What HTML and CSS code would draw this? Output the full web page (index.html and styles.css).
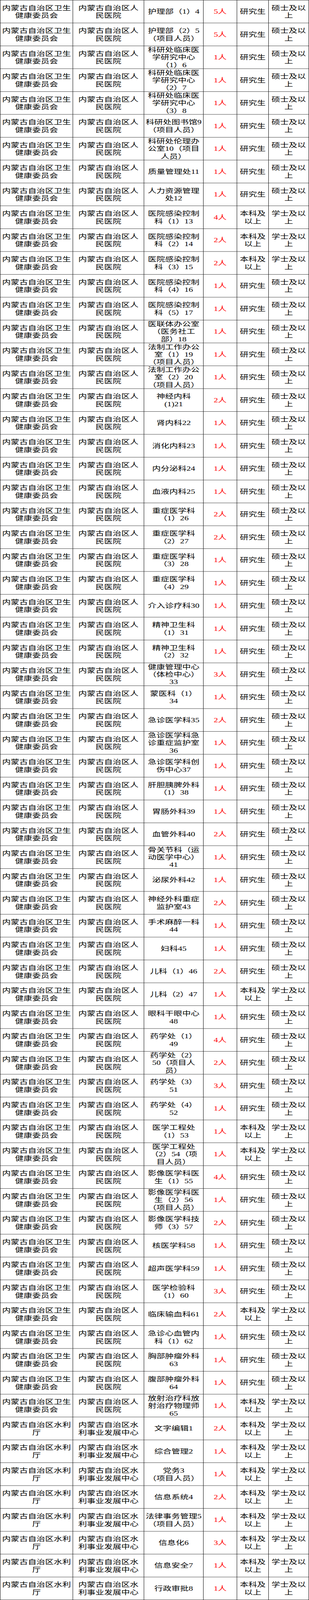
FILE: index.html
```html
<!DOCTYPE html>
<html lang="zh-CN">
<head>
<meta charset="utf-8">
<title>岗位表</title>
<link rel="stylesheet" href="styles.css">
</head>
<body>
<div class="frame">
<div class="table">
<div class="cell org">内蒙古自治区卫生健康委员会</div><div class="cell unit">内蒙古自治区人民医院</div><div class="cell post">护理部（1）4</div><div class="cell num">5人</div><div class="cell edu">研究生</div><div class="cell deg">硕士及以上</div>
<div class="cell org">内蒙古自治区卫生健康委员会</div><div class="cell unit">内蒙古自治区人民医院</div><div class="cell post">护理部（2）5<br>（项目人员）</div><div class="cell num">5人</div><div class="cell edu">研究生</div><div class="cell deg">硕士及以上</div>
<div class="cell org">内蒙古自治区卫生健康委员会</div><div class="cell unit">内蒙古自治区人民医院</div><div class="cell post">科研处临床医<br>学研究中心<br>（1）6</div><div class="cell num">1人</div><div class="cell edu">研究生</div><div class="cell deg">硕士及以上</div>
<div class="cell org">内蒙古自治区卫生健康委员会</div><div class="cell unit">内蒙古自治区人民医院</div><div class="cell post">科研处临床医<br>学研究中心<br>（2）7</div><div class="cell num">1人</div><div class="cell edu">研究生</div><div class="cell deg">硕士及以上</div>
<div class="cell org">内蒙古自治区卫生健康委员会</div><div class="cell unit">内蒙古自治区人民医院</div><div class="cell post">科研处临床医<br>学研究中心<br>（3）8</div><div class="cell num">1人</div><div class="cell edu">研究生</div><div class="cell deg">硕士及以上</div>
<div class="cell org">内蒙古自治区卫生健康委员会</div><div class="cell unit">内蒙古自治区人民医院</div><div class="cell post">科研处图书馆9<br>（项目人员）</div><div class="cell num">1人</div><div class="cell edu">研究生</div><div class="cell deg">硕士及以上</div>
<div class="cell org">内蒙古自治区卫生健康委员会</div><div class="cell unit">内蒙古自治区人民医院</div><div class="cell post">科研处伦理办<br>公室10（项目<br>人员）</div><div class="cell num">1人</div><div class="cell edu">研究生</div><div class="cell deg">硕士及以上</div>
<div class="cell org">内蒙古自治区卫生健康委员会</div><div class="cell unit">内蒙古自治区人民医院</div><div class="cell post">质量管理处11</div><div class="cell num">1人</div><div class="cell edu">研究生</div><div class="cell deg">硕士及以上</div>
<div class="cell org">内蒙古自治区卫生健康委员会</div><div class="cell unit">内蒙古自治区人民医院</div><div class="cell post">人力资源管理<br>处12</div><div class="cell num">1人</div><div class="cell edu">研究生</div><div class="cell deg">硕士及以上</div>
<div class="cell org">内蒙古自治区卫生健康委员会</div><div class="cell unit">内蒙古自治区人民医院</div><div class="cell post">医院感染控制<br>科（1）13</div><div class="cell num">4人</div><div class="cell edu">本科及以上</div><div class="cell deg">学士及以上</div>
<div class="cell org">内蒙古自治区卫生健康委员会</div><div class="cell unit">内蒙古自治区人民医院</div><div class="cell post">医院感染控制<br>科（2）14</div><div class="cell num">2人</div><div class="cell edu">本科及以上</div><div class="cell deg">学士及以上</div>
<div class="cell org">内蒙古自治区卫生健康委员会</div><div class="cell unit">内蒙古自治区人民医院</div><div class="cell post">医院感染控制<br>科（3）15</div><div class="cell num">2人</div><div class="cell edu">本科及以上</div><div class="cell deg">学士及以上</div>
<div class="cell org">内蒙古自治区卫生健康委员会</div><div class="cell unit">内蒙古自治区人民医院</div><div class="cell post">医院感染控制<br>科（4）16</div><div class="cell num">1人</div><div class="cell edu">研究生</div><div class="cell deg">硕士及以上</div>
<div class="cell org">内蒙古自治区卫生健康委员会</div><div class="cell unit">内蒙古自治区人民医院</div><div class="cell post">医院感染控制<br>科（5）17</div><div class="cell num">1人</div><div class="cell edu">研究生</div><div class="cell deg">硕士及以上</div>
<div class="cell org">内蒙古自治区卫生健康委员会</div><div class="cell unit">内蒙古自治区人民医院</div><div class="cell post">医联体办公室<br>（医务社工<br>部）18</div><div class="cell num">1人</div><div class="cell edu">研究生</div><div class="cell deg">硕士及以上</div>
<div class="cell org">内蒙古自治区卫生健康委员会</div><div class="cell unit">内蒙古自治区人民医院</div><div class="cell post">法制工作办公<br>室（1）19<br>（项目人员）</div><div class="cell num">1人</div><div class="cell edu">研究生</div><div class="cell deg">硕士及以上</div>
<div class="cell org">内蒙古自治区卫生健康委员会</div><div class="cell unit">内蒙古自治区人民医院</div><div class="cell post">法制工作办公<br>室（2）20<br>（项目人员）</div><div class="cell num">1人</div><div class="cell edu">研究生</div><div class="cell deg">硕士及以上</div>
<div class="cell org">内蒙古自治区卫生健康委员会</div><div class="cell unit">内蒙古自治区人民医院</div><div class="cell post">神经内科<br>(1)21</div><div class="cell num">2人</div><div class="cell edu">研究生</div><div class="cell deg">硕士及以上</div>
<div class="cell org">内蒙古自治区卫生健康委员会</div><div class="cell unit">内蒙古自治区人民医院</div><div class="cell post">肾内科22</div><div class="cell num">1人</div><div class="cell edu">研究生</div><div class="cell deg">硕士及以上</div>
<div class="cell org">内蒙古自治区卫生健康委员会</div><div class="cell unit">内蒙古自治区人民医院</div><div class="cell post">消化内科23</div><div class="cell num">1人</div><div class="cell edu">研究生</div><div class="cell deg">硕士及以上</div>
<div class="cell org">内蒙古自治区卫生健康委员会</div><div class="cell unit">内蒙古自治区人民医院</div><div class="cell post">内分泌科24</div><div class="cell num">1人</div><div class="cell edu">研究生</div><div class="cell deg">硕士及以上</div>
<div class="cell org">内蒙古自治区卫生健康委员会</div><div class="cell unit">内蒙古自治区人民医院</div><div class="cell post">血液内科25</div><div class="cell num">1人</div><div class="cell edu">研究生</div><div class="cell deg">硕士及以上</div>
<div class="cell org">内蒙古自治区卫生健康委员会</div><div class="cell unit">内蒙古自治区人民医院</div><div class="cell post">重症医学科<br>（1）26</div><div class="cell num">2人</div><div class="cell edu">研究生</div><div class="cell deg">硕士及以上</div>
<div class="cell org">内蒙古自治区卫生健康委员会</div><div class="cell unit">内蒙古自治区人民医院</div><div class="cell post">重症医学科<br>（2）27</div><div class="cell num">2人</div><div class="cell edu">研究生</div><div class="cell deg">硕士及以上</div>
<div class="cell org">内蒙古自治区卫生健康委员会</div><div class="cell unit">内蒙古自治区人民医院</div><div class="cell post">重症医学科<br>（3）28</div><div class="cell num">1人</div><div class="cell edu">研究生</div><div class="cell deg">硕士及以上</div>
<div class="cell org">内蒙古自治区卫生健康委员会</div><div class="cell unit">内蒙古自治区人民医院</div><div class="cell post">重症医学科<br>（4）29</div><div class="cell num">1人</div><div class="cell edu">研究生</div><div class="cell deg">硕士及以上</div>
<div class="cell org">内蒙古自治区卫生健康委员会</div><div class="cell unit">内蒙古自治区人民医院</div><div class="cell post">介入诊疗科30</div><div class="cell num">1人</div><div class="cell edu">研究生</div><div class="cell deg">硕士及以上</div>
<div class="cell org">内蒙古自治区卫生健康委员会</div><div class="cell unit">内蒙古自治区人民医院</div><div class="cell post">精神卫生科<br>（1）31</div><div class="cell num">1人</div><div class="cell edu">研究生</div><div class="cell deg">硕士及以上</div>
<div class="cell org">内蒙古自治区卫生健康委员会</div><div class="cell unit">内蒙古自治区人民医院</div><div class="cell post">精神卫生科<br>（2）32</div><div class="cell num">1人</div><div class="cell edu">研究生</div><div class="cell deg">硕士及以上</div>
<div class="cell org">内蒙古自治区卫生健康委员会</div><div class="cell unit">内蒙古自治区人民医院</div><div class="cell post">健康管理中心<br>（体检中心）<br>33</div><div class="cell num">3人</div><div class="cell edu">研究生</div><div class="cell deg">硕士及以上</div>
<div class="cell org">内蒙古自治区卫生健康委员会</div><div class="cell unit">内蒙古自治区人民医院</div><div class="cell post">蒙医科（1）<br>34</div><div class="cell num">1人</div><div class="cell edu">研究生</div><div class="cell deg">硕士及以上</div>
<div class="cell org">内蒙古自治区卫生健康委员会</div><div class="cell unit">内蒙古自治区人民医院</div><div class="cell post">急诊医学科35</div><div class="cell num">2人</div><div class="cell edu">研究生</div><div class="cell deg">硕士及以上</div>
<div class="cell org">内蒙古自治区卫生健康委员会</div><div class="cell unit">内蒙古自治区人民医院</div><div class="cell post">急诊医学科急<br>诊重症监护室<br>36</div><div class="cell num">1人</div><div class="cell edu">研究生</div><div class="cell deg">硕士及以上</div>
<div class="cell org">内蒙古自治区卫生健康委员会</div><div class="cell unit">内蒙古自治区人民医院</div><div class="cell post">急诊医学科创<br>伤中心37</div><div class="cell num">1人</div><div class="cell edu">研究生</div><div class="cell deg">硕士及以上</div>
<div class="cell org">内蒙古自治区卫生健康委员会</div><div class="cell unit">内蒙古自治区人民医院</div><div class="cell post">肝胆胰脾外科<br>（1）38</div><div class="cell num">1人</div><div class="cell edu">研究生</div><div class="cell deg">硕士及以上</div>
<div class="cell org">内蒙古自治区卫生健康委员会</div><div class="cell unit">内蒙古自治区人民医院</div><div class="cell post">胃肠外科39</div><div class="cell num">1人</div><div class="cell edu">研究生</div><div class="cell deg">硕士及以上</div>
<div class="cell org">内蒙古自治区卫生健康委员会</div><div class="cell unit">内蒙古自治区人民医院</div><div class="cell post">血管外科40</div><div class="cell num">2人</div><div class="cell edu">研究生</div><div class="cell deg">硕士及以上</div>
<div class="cell org">内蒙古自治区卫生健康委员会</div><div class="cell unit">内蒙古自治区人民医院</div><div class="cell post">骨关节科（运<br>动医学中心）<br>41</div><div class="cell num">1人</div><div class="cell edu">研究生</div><div class="cell deg">硕士及以上</div>
<div class="cell org">内蒙古自治区卫生健康委员会</div><div class="cell unit">内蒙古自治区人民医院</div><div class="cell post">泌尿外科42</div><div class="cell num">1人</div><div class="cell edu">研究生</div><div class="cell deg">硕士及以上</div>
<div class="cell org">内蒙古自治区卫生健康委员会</div><div class="cell unit">内蒙古自治区人民医院</div><div class="cell post">神经外科重症<br>监护室43</div><div class="cell num">2人</div><div class="cell edu">研究生</div><div class="cell deg">硕士及以上</div>
<div class="cell org">内蒙古自治区卫生健康委员会</div><div class="cell unit">内蒙古自治区人民医院</div><div class="cell post">手术麻醉一科<br>44</div><div class="cell num">1人</div><div class="cell edu">研究生</div><div class="cell deg">硕士及以上</div>
<div class="cell org">内蒙古自治区卫生健康委员会</div><div class="cell unit">内蒙古自治区人民医院</div><div class="cell post">妇科45</div><div class="cell num">1人</div><div class="cell edu">研究生</div><div class="cell deg">硕士及以上</div>
<div class="cell org">内蒙古自治区卫生健康委员会</div><div class="cell unit">内蒙古自治区人民医院</div><div class="cell post">儿科（1）46</div><div class="cell num">2人</div><div class="cell edu">研究生</div><div class="cell deg">硕士及以上</div>
<div class="cell org">内蒙古自治区卫生健康委员会</div><div class="cell unit">内蒙古自治区人民医院</div><div class="cell post">儿科（2）47</div><div class="cell num">1人</div><div class="cell edu">本科及以上</div><div class="cell deg">学士及以上</div>
<div class="cell org">内蒙古自治区卫生健康委员会</div><div class="cell unit">内蒙古自治区人民医院</div><div class="cell post">眼科干眼中心<br>48</div><div class="cell num">1人</div><div class="cell edu">研究生</div><div class="cell deg">硕士及以上</div>
<div class="cell org">内蒙古自治区卫生健康委员会</div><div class="cell unit">内蒙古自治区人民医院</div><div class="cell post">药学处（1）<br>49</div><div class="cell num">4人</div><div class="cell edu">研究生</div><div class="cell deg">硕士及以上</div>
<div class="cell org">内蒙古自治区卫生健康委员会</div><div class="cell unit">内蒙古自治区人民医院</div><div class="cell post">药学处（2）<br>50（项目人<br>员）</div><div class="cell num">2人</div><div class="cell edu">研究生</div><div class="cell deg">硕士及以上</div>
<div class="cell org">内蒙古自治区卫生健康委员会</div><div class="cell unit">内蒙古自治区人民医院</div><div class="cell post">药学处（3）<br>51</div><div class="cell num">3人</div><div class="cell edu">研究生</div><div class="cell deg">硕士及以上</div>
<div class="cell org">内蒙古自治区卫生健康委员会</div><div class="cell unit">内蒙古自治区人民医院</div><div class="cell post">药学处（4）<br>52</div><div class="cell num">1人</div><div class="cell edu">研究生</div><div class="cell deg">硕士及以上</div>
<div class="cell org">内蒙古自治区卫生健康委员会</div><div class="cell unit">内蒙古自治区人民医院</div><div class="cell post">医学工程处<br>（1）53</div><div class="cell num">1人</div><div class="cell edu">本科及以上</div><div class="cell deg">学士及以上</div>
<div class="cell org">内蒙古自治区卫生健康委员会</div><div class="cell unit">内蒙古自治区人民医院</div><div class="cell post">医学工程处<br>（2）54（项<br>目人员）</div><div class="cell num">1人</div><div class="cell edu">本科及以上</div><div class="cell deg">学士及以上</div>
<div class="cell org">内蒙古自治区卫生健康委员会</div><div class="cell unit">内蒙古自治区人民医院</div><div class="cell post">影像医学科医<br>生（1）55</div><div class="cell num">4人</div><div class="cell edu">研究生</div><div class="cell deg">硕士及以上</div>
<div class="cell org">内蒙古自治区卫生健康委员会</div><div class="cell unit">内蒙古自治区人民医院</div><div class="cell post">影像医学科医<br>生（2）56<br>（项目人员）</div><div class="cell num">1人</div><div class="cell edu">研究生</div><div class="cell deg">硕士及以上</div>
<div class="cell org">内蒙古自治区卫生健康委员会</div><div class="cell unit">内蒙古自治区人民医院</div><div class="cell post">影像医学科技<br>师（3）57</div><div class="cell num">2人</div><div class="cell edu">研究生</div><div class="cell deg">硕士及以上</div>
<div class="cell org">内蒙古自治区卫生健康委员会</div><div class="cell unit">内蒙古自治区人民医院</div><div class="cell post">核医学科58</div><div class="cell num">1人</div><div class="cell edu">研究生</div><div class="cell deg">硕士及以上</div>
<div class="cell org">内蒙古自治区卫生健康委员会</div><div class="cell unit">内蒙古自治区人民医院</div><div class="cell post">超声医学科59</div><div class="cell num">1人</div><div class="cell edu">研究生</div><div class="cell deg">硕士及以上</div>
<div class="cell org">内蒙古自治区卫生健康委员会</div><div class="cell unit">内蒙古自治区人民医院</div><div class="cell post">医学检验科<br>（1）60</div><div class="cell num">3人</div><div class="cell edu">研究生</div><div class="cell deg">硕士及以上</div>
<div class="cell org">内蒙古自治区卫生健康委员会</div><div class="cell unit">内蒙古自治区人民医院</div><div class="cell post">临床输血科61</div><div class="cell num">2人</div><div class="cell edu">本科及以上</div><div class="cell deg">学士及以上</div>
<div class="cell org">内蒙古自治区卫生健康委员会</div><div class="cell unit">内蒙古自治区人民医院</div><div class="cell post">急诊心血管内<br>科（1）62</div><div class="cell num">1人</div><div class="cell edu">研究生</div><div class="cell deg">硕士及以上</div>
<div class="cell org">内蒙古自治区卫生健康委员会</div><div class="cell unit">内蒙古自治区人民医院</div><div class="cell post">胸部肿瘤外科<br>63</div><div class="cell num">1人</div><div class="cell edu">研究生</div><div class="cell deg">硕士及以上</div>
<div class="cell org">内蒙古自治区卫生健康委员会</div><div class="cell unit">内蒙古自治区人民医院</div><div class="cell post">腹部肿瘤外科<br>64</div><div class="cell num">1人</div><div class="cell edu">研究生</div><div class="cell deg">硕士及以上</div>
<div class="cell org">内蒙古自治区卫生健康委员会</div><div class="cell unit">内蒙古自治区人民医院</div><div class="cell post">放射治疗科放<br>射治疗物理师<br>65</div><div class="cell num">1人</div><div class="cell edu">本科及以上</div><div class="cell deg">学士及以上</div>
<div class="cell org">内蒙古自治区水利厅</div><div class="cell unit">内蒙古自治区水利事业发展中心</div><div class="cell post">文字编辑1</div><div class="cell num">2人</div><div class="cell edu">本科及以上</div><div class="cell deg">学士及以上</div>
<div class="cell org">内蒙古自治区水利厅</div><div class="cell unit">内蒙古自治区水利事业发展中心</div><div class="cell post">综合管理2</div><div class="cell num">1人</div><div class="cell edu">本科及以上</div><div class="cell deg">学士及以上</div>
<div class="cell org">内蒙古自治区水利厅</div><div class="cell unit">内蒙古自治区水利事业发展中心</div><div class="cell post">党务3<br>（项目人员）</div><div class="cell num">1人</div><div class="cell edu">本科及以上</div><div class="cell deg">学士及以上</div>
<div class="cell org">内蒙古自治区水利厅</div><div class="cell unit">内蒙古自治区水利事业发展中心</div><div class="cell post">信息系统4</div><div class="cell num">2人</div><div class="cell edu">本科及以上</div><div class="cell deg">学士及以上</div>
<div class="cell org">内蒙古自治区水利厅</div><div class="cell unit">内蒙古自治区水利事业发展中心</div><div class="cell post">法律事务管理5<br>（项目人员）</div><div class="cell num">1人</div><div class="cell edu">本科及以上</div><div class="cell deg">学士及以上</div>
<div class="cell org">内蒙古自治区水利厅</div><div class="cell unit">内蒙古自治区水利事业发展中心</div><div class="cell post">信息化6</div><div class="cell num">3人</div><div class="cell edu">本科及以上</div><div class="cell deg">学士及以上</div>
<div class="cell org">内蒙古自治区水利厅</div><div class="cell unit">内蒙古自治区水利事业发展中心</div><div class="cell post">信息安全7</div><div class="cell num">1人</div><div class="cell edu">本科及以上</div><div class="cell deg">学士及以上</div>
<div class="cell org">内蒙古自治区水利厅</div><div class="cell unit">内蒙古自治区水利事业发展中心</div><div class="cell post">行政审批8</div><div class="cell num">1人</div><div class="cell edu">本科及以上</div><div class="cell deg">学士及以上</div>
</div>
</div>
</body>
</html>
```

FILE: styles.css
```css
* {
  box-sizing: border-box;
}

html,
body {
  margin: 0;
  padding: 0;
  background: #ffffff;
  overflow: hidden;
}

/* The frame is the visible window; the table is laid out on the
   791 x 5601 reference grid and scaled to fit that window. */
.frame {
  width: 100vw;
  height: 100vh;
  overflow: hidden;
}

.table {
  display: grid;
  grid-template-columns: 186px 182px 152px 86px 81px 103px;
  grid-auto-rows: 80px;
  width: 791px;
  border-top: 1px solid #000000;
  border-left: 1px solid #000000;
  font-family: "Liberation Serif", "Noto Sans CJK SC", serif;
  font-size: 22px;
  line-height: 26.5px;
  color: #000000;
  transform-origin: 0 0;
  transform: scale(1, 0.7385);
  transform: scale(tan(atan2(100vw, 791px)), tan(atan2(100vh, 5601px)));
}

.cell {
  display: flex;
  align-items: center;
  justify-content: center;
  text-align: center;
  padding: 2px 2px 0;
  border-right: 1px solid #000000;
  border-bottom: 1px solid #000000;
  overflow: visible;
}

.unit {
  padding: 2px 4px 0;
}

.post {
  white-space: nowrap;
  padding: 2px 0 0;
}

.num {
  color: #ff0000;
}
```
